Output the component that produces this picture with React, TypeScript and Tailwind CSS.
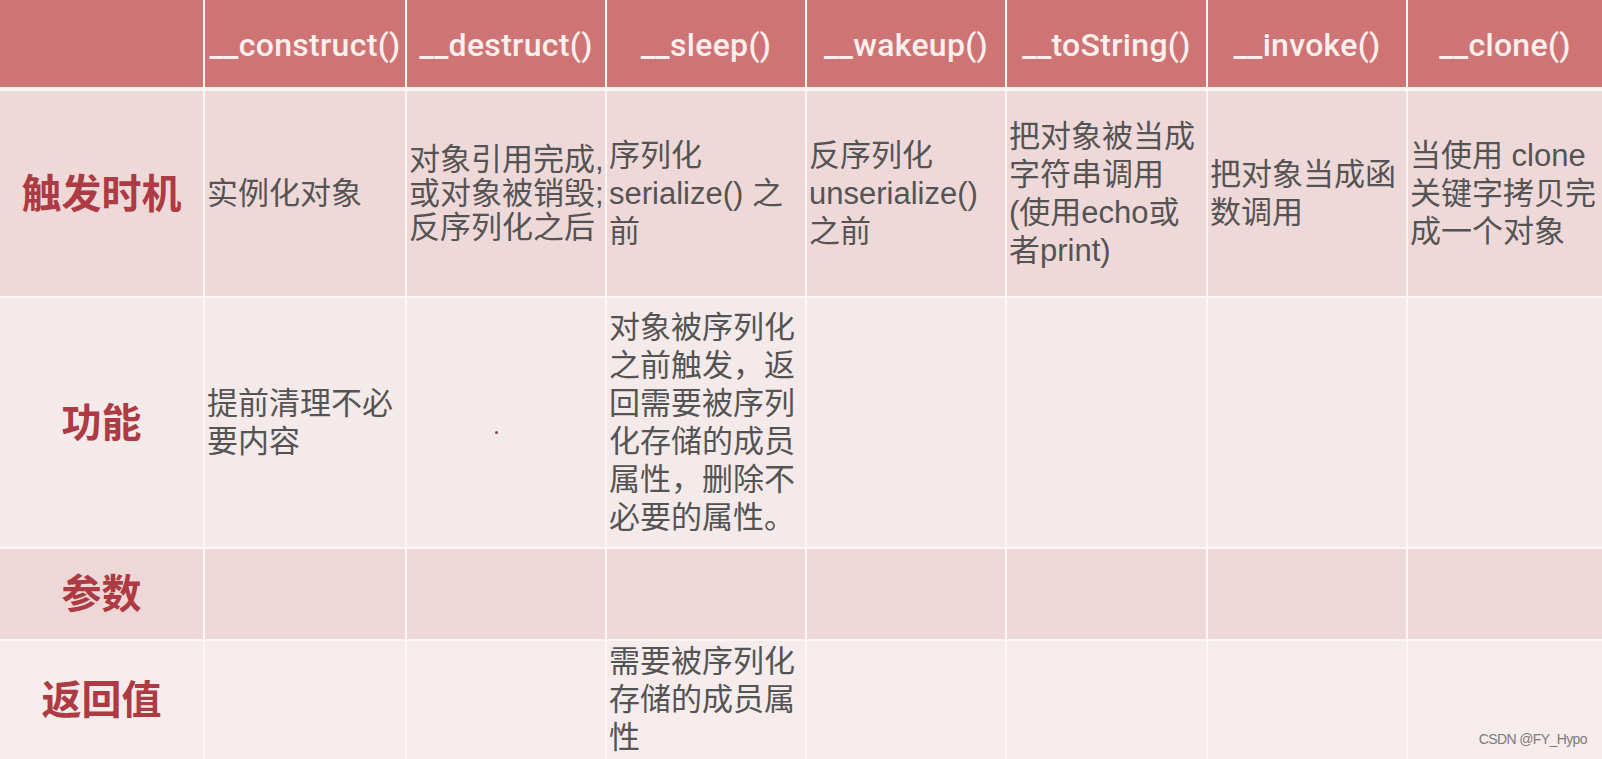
import React from "react";

const headers = [
    "__construct()",
    "__destruct()",
    "__sleep()",
    "__wakeup()",
    "__toString()",
    "__invoke()",
    "__clone()",
];

type Row = {
    label: string;
    bg: string;
    cells: string[][];
};

const rows: Row[] = [
    {
        label: "触发时机",
        bg: "bg-[#efd9d8]",
        cells: [
            ["实例化对象"],
            ["对象引用完成,", "或对象被销毁;", "反序列化之后"],
            ["序列化", "serialize() 之", "前"],
            ["反序列化", "unserialize()", "之前"],
            ["把对象被当成", "字符串调用", "(使用echo或", "者print)"],
            ["把对象当成函", "数调用"],
            ["当使用 clone", "关键字拷贝完", "成一个对象"],
        ],
    },
    {
        label: "功能",
        bg: "bg-[#f4eae9]",
        cells: [
            ["提前清理不必", "要内容"],
            ["·"],
            [
                "对象被序列化",
                "之前触发，返",
                "回需要被序列",
                "化存储的成员",
                "属性，删除不",
                "必要的属性。",
            ],
            [],
            [],
            [],
            [],
        ],
    },
    {
        label: "参数",
        bg: "bg-[#edd8d7]",
        cells: [[], [], [], [], [], [], []],
    },
    {
        label: "返回值",
        bg: "bg-[#f5eceb]",
        cells: [[], [], ["需要被序列化", "存储的成员属", "性"], [], [], [], []],
    },
];

const Cell = ({ lines, bg, tight }: { lines: string[]; bg: string; tight?: boolean }) => {
    if (lines.length === 1 && lines[0] === "·") {
        return (
            <div className={`${bg} flex items-center justify-center`}>
                <span className="mt-[20px] mr-[20px] block h-[3px] w-[3px] rounded-full bg-[#8a4a44]" />
            </div>
        );
    }
    return (
        <div className={`${bg} flex items-center pl-[2px]`}>
            <div
                className={`text-[31px] text-[#545454] whitespace-nowrap ${
                    tight ? "leading-[34px]" : "leading-[38px]"
                }`}
            >
                {lines.map((l, i) => (
                    <div key={i}>{l}</div>
                ))}
            </div>
        </div>
    );
};

export default function App() {
    return (
        <div
            className="relative h-[759px] w-[1602px] overflow-hidden bg-[#fdf6f4]"
            style={{ fontFamily: '"Liberation Sans", "Noto Sans CJK SC", sans-serif' }}
        >
            <div className="grid h-full grid-cols-[203px_200px_198px_198px_198px_199px_198px_1fr] grid-rows-[89px_205px_249px_90px_118px] gap-x-[2px] gap-y-[2px]">
                <div className="border-b-2 border-[#fbf3f1] bg-[#cf7474]" />
                {headers.map((h) => (
                    <div
                        key={h}
                        className="flex items-center justify-center border-b-2 border-[#fbf3f1] bg-[#cf7474] pb-[2px] pt-[4px]"
                    >
                        <span
                            className="text-[32px] font-medium tracking-[0.3px] text-[#fcefee]"
                            style={{ fontFamily: 'Roboto, "Liberation Sans", sans-serif' }}
                        >
                            {h}
                        </span>
                    </div>
                ))}
                {rows.map((r) => (
                    <React.Fragment key={r.label}>
                        <div className={`${r.bg} flex items-center justify-center`}>
                            <span className="text-[40px] font-bold text-[#ae3a43]">{r.label}</span>
                        </div>
                        {r.cells.map((c, i) => (
                            <Cell
                                key={i}
                                lines={c}
                                bg={r.bg}
                                tight={r.label === "触发时机" && i === 1}
                            />
                        ))}
                    </React.Fragment>
                ))}
            </div>
            <div
                className="absolute bottom-[9px] right-[15px] text-[14px] tracking-[-0.6px] text-[#7c7c7c]"
                style={{ fontFamily: '"Liberation Sans Narrow", "Liberation Sans", sans-serif' }}
            >
                CSDN @FY_Hypo
            </div>
        </div>
    );
}
